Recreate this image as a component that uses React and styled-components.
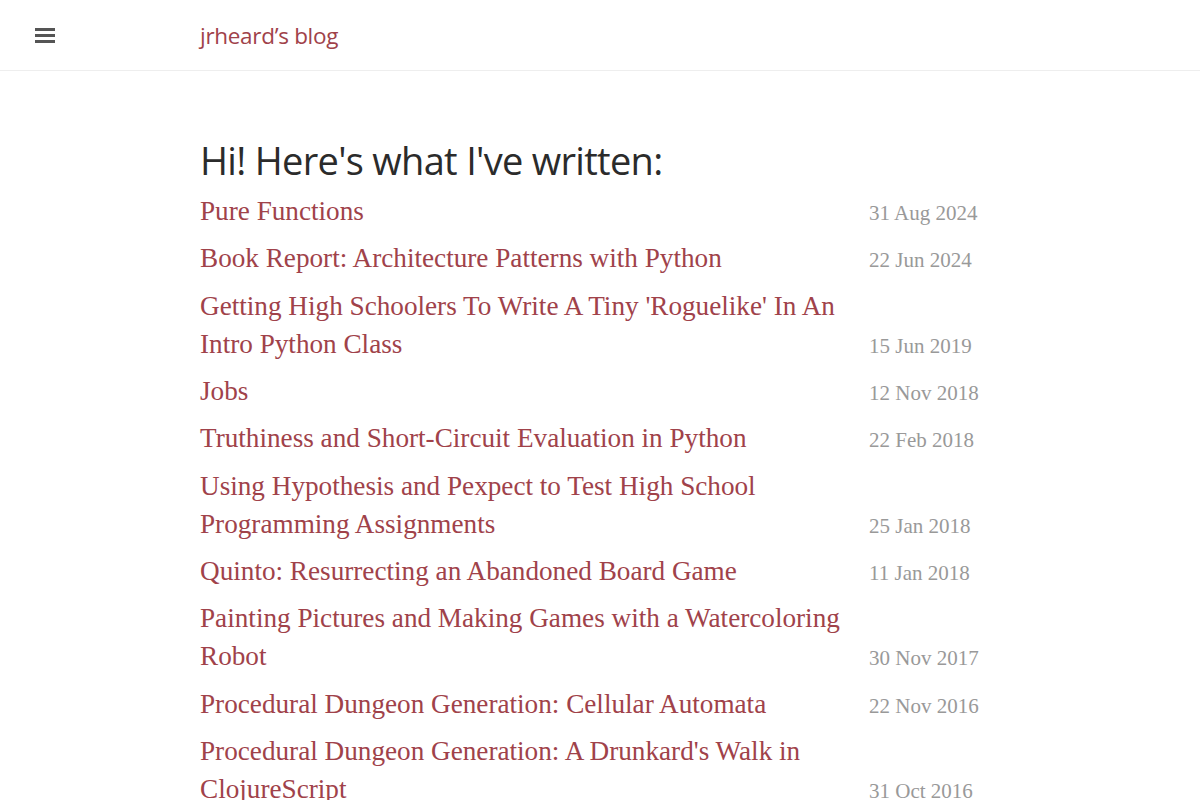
import styled, { createGlobalStyle } from 'styled-components';

const GlobalStyle = createGlobalStyle`
  html, body {
    margin: 0;
    padding: 0;
    background: #fff;
  }
  body {
    font-family: 'Liberation Serif', 'DejaVu Serif', serif;
  }
`;

const posts = [
  { title: 'Pure Functions', date: '31 Aug 2024' },
  { title: 'Book Report: Architecture Patterns with Python', date: '22 Jun 2024' },
  {
    title: "Getting High Schoolers To Write A Tiny 'Roguelike' In An Intro Python Class",
    date: '15 Jun 2019',
  },
  { title: 'Jobs', date: '12 Nov 2018' },
  { title: 'Truthiness and Short-Circuit Evaluation in Python', date: '22 Feb 2018' },
  {
    title: 'Using Hypothesis and Pexpect to Test High School Programming Assignments',
    date: '25 Jan 2018',
  },
  { title: 'Quinto: Resurrecting an Abandoned Board Game', date: '11 Jan 2018' },
  {
    title: 'Painting Pictures and Making Games with a Watercoloring Robot',
    date: '30 Nov 2017',
  },
  { title: 'Procedural Dungeon Generation: Cellular Automata', date: '22 Nov 2016' },
  {
    title: "Procedural Dungeon Generation: A Drunkard's Walk in ClojureScript",
    date: '31 Oct 2016',
  },
];

const Header = styled.header`
  height: 71px;
  border-bottom: 1px solid #eee;
  display: flex;
  align-items: center;
  box-sizing: border-box;
`;

const MenuButton = styled.button`
  width: 200px;
  height: 100%;
  padding: 0 0 0 35px;
  border: 0;
  background: none;
  display: flex;
  flex-direction: column;
  justify-content: center;
  gap: 3px;
  cursor: pointer;

  span {
    display: block;
    width: 20px;
    height: 3px;
    background: #555;
  }
`;

const SiteTitle = styled.a`
  font-family: 'Open Sans', 'Liberation Sans', sans-serif;
  font-size: 22.5px;
  color: #a0424a;
  text-decoration: none;
  letter-spacing: -0.3px;
`;

const Main = styled.main`
  width: 800px;
  margin: 0 auto;
  padding-top: 63px;
`;

const Heading = styled.h1`
  font-family: 'Open Sans', 'Liberation Sans', sans-serif;
  font-weight: 400;
  font-size: 38px;
  letter-spacing: -0.7px;
  color: #2b2b2b;
  margin: 0 0 7px;
  line-height: 52px;
`;

const PostList = styled.ul`
  list-style: none;
  margin: 0;
  padding: 0;
`;

const PostRow = styled.li`
  display: flex;
  align-items: flex-end;
  margin-bottom: 9.4px;
`;

const PostLink = styled.a`
  width: 650px;
  font-size: 27.2px;
  line-height: 37.95px;
  color: #a0424a;
  text-decoration: none;
`;

const PostDate = styled.span`
  margin-left: 19px;
  font-size: 21px;
  line-height: 36px;
  color: #999;
  white-space: nowrap;
`;

export default function App() {
  return (
    <>
      <GlobalStyle />
      <Header>
        <MenuButton aria-label="menu">
          <span />
          <span />
          <span />
        </MenuButton>
        <SiteTitle href="#">jrheard’s blog</SiteTitle>
      </Header>
      <Main>
        <Heading>Hi! Here's what I've written:</Heading>
        <PostList>
          {posts.map((p) => (
            <PostRow key={p.title}>
              <PostLink href="#">{p.title}</PostLink>
              <PostDate>{p.date}</PostDate>
            </PostRow>
          ))}
        </PostList>
      </Main>
    </>
  );
}
